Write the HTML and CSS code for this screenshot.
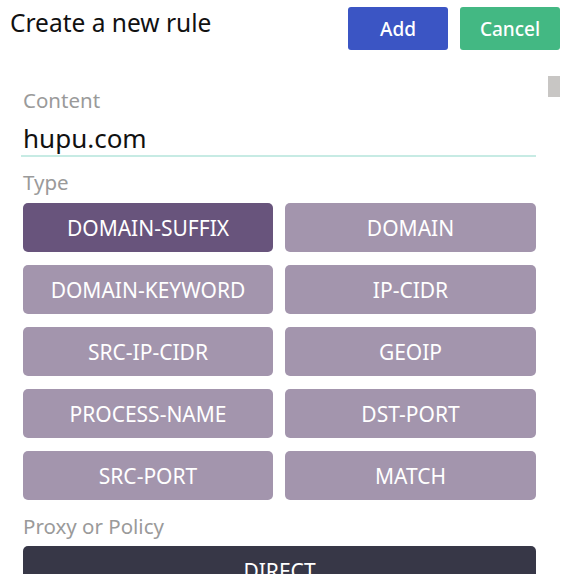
FILE: index.html
```html
<!DOCTYPE html>
<html>
<head>
<meta charset="utf-8">
<link rel="stylesheet" href="styles.css">
</head>
<body>
<div class="page">
  <header class="header">
    <h1 class="title">Create a new rule</h1>
    <div class="actions">
      <button class="btn btn-add">Add</button>
      <button class="btn btn-cancel">Cancel</button>
    </div>
  </header>
  <div class="scroll-thumb"></div>
  <main class="form">
    <div class="label label-content">Content</div>
    <div class="input">hupu.com</div>
    <div class="label label-type">Type</div>
    <div class="type-grid">
      <button class="type selected">DOMAIN-SUFFIX</button>
      <button class="type">DOMAIN</button>
      <button class="type">DOMAIN-KEYWORD</button>
      <button class="type">IP-CIDR</button>
      <button class="type">SRC-IP-CIDR</button>
      <button class="type">GEOIP</button>
      <button class="type">PROCESS-NAME</button>
      <button class="type">DST-PORT</button>
      <button class="type">SRC-PORT</button>
      <button class="type">MATCH</button>
    </div>
    <div class="label label-proxy">Proxy or Policy</div>
    <button class="policy">DIRECT</button>
  </main>
</div>
</body>
</html>
```
FILE: styles.css
```css
* { box-sizing: border-box; }
html, body { margin: 0; padding: 0; background: #fff; overflow: hidden; }
body {
  font-family: "Noto Sans", "Open Sans", sans-serif;
  width: 567px;
  height: 574px;
}
.page { position: relative; height: 574px; }
.header {
  display: flex;
  justify-content: space-between;
  align-items: flex-start;
  padding: 7px 7px 0 10px;
}
.title {
  margin: 0;
  font-weight: 400;
  font-size: 24.5px;
  line-height: 32px;
  color: #111;
}
.actions { display: flex; gap: 12px; }
.btn {
  width: 100px;
  height: 43px;
  border: none;
  border-radius: 3px;
  color: #fff;
  font-family: inherit;
  font-size: 19px;
  font-weight: 500;
  padding: 0;
}
.btn-add { background: #3b55c4; }
.btn-cancel { background: #43b883; }
.scroll-thumb {
  position: absolute;
  left: 548px;
  top: 76px;
  width: 12px;
  height: 21px;
  background: #c8c6c4;
}
.form {
  padding: 38px 31px 0 23px;
}
.label {
  color: #9a9a9a;
  font-size: 20.5px;
  line-height: 24px;
}
.input {
  font-size: 26px;
  line-height: 34px;
  color: #111;
  margin-top: 9px;
  margin-left: -2px;
  padding-left: 2px;
  border-bottom: 2px solid #c7ebe4;
}
.label-type { margin-top: 13px; }
.type-grid {
  margin-top: 9px;
  display: grid;
  grid-template-columns: 250px 251px;
  column-gap: 12px;
  row-gap: 13px;
}
.type {
  height: 49px;
  border: none;
  border-radius: 5px;
  background: #a395ad;
  color: #fff;
  font-family: inherit;
  font-size: 21px;
  padding: 0;
}
.type.selected { background: #68547c; }
.label-proxy { margin-top: 14px; }
.policy {
  margin-top: 8px;
  width: 513px;
  height: 49px;
  border: none;
  border-radius: 5px;
  background: #373747;
  color: #fff;
  font-family: inherit;
  font-size: 21px;
  padding: 0;
}
```
